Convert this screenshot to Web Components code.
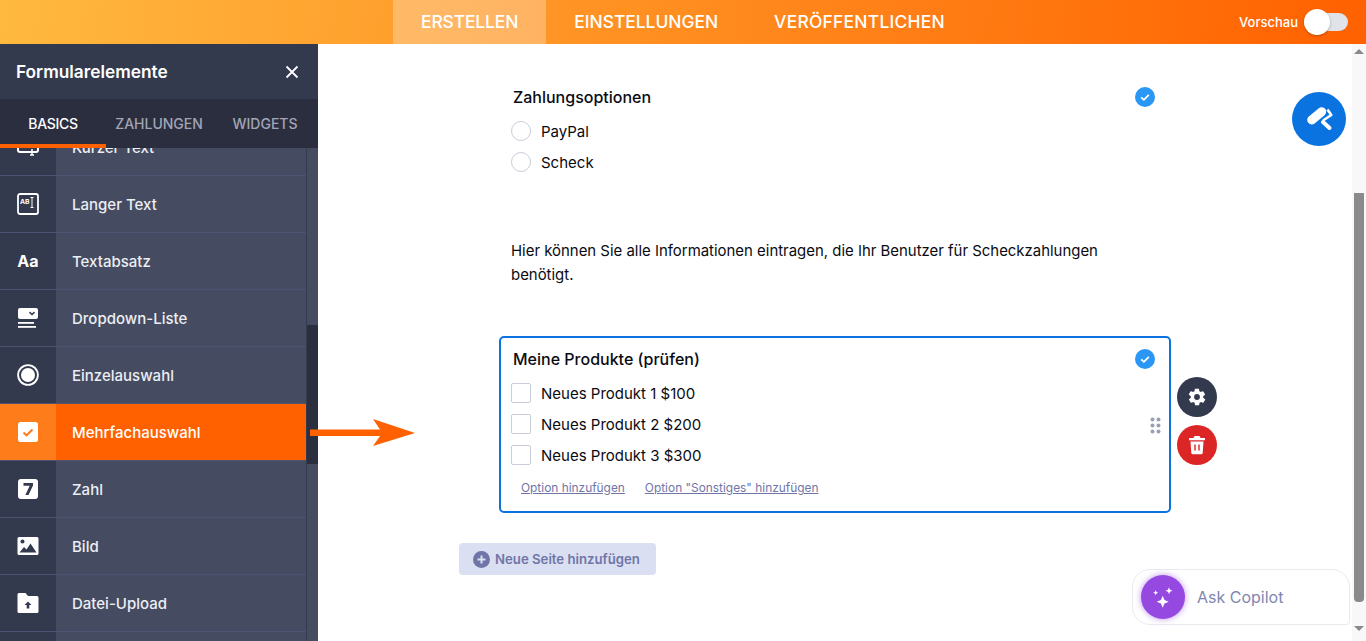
<!DOCTYPE html>
<html lang="de">
<head>
<meta charset="utf-8">
<title>Formular erstellen</title>
<style>
html, body { margin: 0; height: 100%; overflow: hidden; background: #fff; font-family: Inter, "Liberation Sans", sans-serif; }
</style>
</head>
<body>
<form-app>
  <top-bar slot="top">
    <nav-tab active style="letter-spacing:-.1px">ERSTELLEN</nav-tab>
    <nav-tab>EINSTELLUNGEN</nav-tab>
    <nav-tab style="letter-spacing:.27px">VERÖFFENTLICHEN</nav-tab>
  </top-bar>

  <element-panel slot="side">
    <panel-item label="Kurzer Text">
      <svg viewBox="0 0 22 22" width="22" height="22" fill="none" stroke="#fff" stroke-width="2"><rect x="1" y="1" width="20" height="15" rx="2"/><path d="M15 13v6M13 19h4" stroke-width="1.5"/><text x="3.500" y="11" font-size="7" font-weight="700" fill="#fff" stroke="none" font-family="Inter, sans-serif">AB</text></svg>
    </panel-item>
    <panel-item label="Langer Text">
      <svg viewBox="0 0 22 22" width="22" height="22" fill="none" stroke="#fff"><rect x="1" y="1" width="20" height="20" rx="2" stroke-width="1.800"/><text x="3" y="11" font-size="6.800" font-weight="700" fill="#fff" stroke="none" font-family="Inter, sans-serif">AB</text><path d="M13.500 4.500h3M15 4.500v10M13.500 14.500h3" stroke-width="1"/></svg>
    </panel-item>
    <panel-item label="Textabsatz">
      <span style="font:700 16px Inter, sans-serif;color:#fff;letter-spacing:.2px">Aa</span>
    </panel-item>
    <panel-item label="Dropdown-Liste">
      <svg viewBox="0 0 22 22" width="22" height="22" fill="#fff"><path d="M3 1h16a2 2 0 0 1 2 2v7a2 2 0 0 1-2 2H3a2 2 0 0 1-2-2V3a2 2 0 0 1 2-2z"/><path d="M12.500 5.200l2.500 2.300 2.500-2.300" fill="none" stroke="#343a4e" stroke-width="1.600"/><rect x="1" y="15" width="16" height="1.800"/><rect x="1" y="19" width="18" height="1.800"/></svg>
    </panel-item>
    <panel-item label="Einzelauswahl">
      <svg viewBox="0 0 22 22" width="22" height="22"><circle cx="11" cy="11" r="9.900" fill="none" stroke="#fff" stroke-width="1.800"/><circle cx="11" cy="11" r="7" fill="#fff"/></svg>
    </panel-item>
    <panel-item label="Mehrfachauswahl" active>
      <svg viewBox="0 0 22 22" width="22" height="22"><rect x="1" y="1" width="20" height="20" rx="2.500" fill="#fff"/><path d="M6.500 11.500l3 2.800 6-5.800" fill="none" stroke="#ff7c1a" stroke-width="2"/></svg>
    </panel-item>
    <panel-item label="Zahl">
      <svg viewBox="0 0 22 22" width="22" height="22"><rect x="1" y="1" width="20" height="20" rx="3" fill="#fff"/><path d="M6.500 5h9.500v2.600L11.500 17H8.400l4.300-9.300H6.500z" fill="#343a4e"/></svg>
    </panel-item>
    <panel-item label="Bild">
      <svg viewBox="0 0 22 22" width="22" height="22" fill="#fff"><path d="M2 2h18a1.500 1.500 0 0 1 1.500 1.500v15A1.500 1.500 0 0 1 20 20H2a1.500 1.500 0 0 1-1.500-1.500v-15A1.500 1.500 0 0 1 2 2z"/><circle cx="5.500" cy="6.500" r="2" fill="#343a4e"/><path d="M2.500 17.500l4.500-5.500 2.500 2.500 4-6 6 9z" fill="#343a4e"/></svg>
    </panel-item>
    <panel-item label="Datei-Upload">
      <svg viewBox="0 0 22 22" width="22" height="22" fill="#fff"><path d="M2 1h6.500L11 4h9a1.500 1.500 0 0 1 1.500 1.500V19.500A1.500 1.500 0 0 1 20 21H2a1.500 1.500 0 0 1-1.500-1.500v-17A1.500 1.500 0 0 1 2 1z"/><path d="M11 9.500l3.500 3.500h-2.200v3.500h-2.600V13H7.500z" fill="#343a4e"/></svg>
    </panel-item>
    <panel-item></panel-item>
  </element-panel>

  <form-canvas slot="main">
    <form-question title="Zahlungsoptionen">
      <choice-row kind="radio">PayPal</choice-row>
      <choice-row kind="radio">Scheck</choice-row>
    </form-question>

    <form-note>Hier können Sie alle Informationen eintragen, die Ihr Benutzer für Scheckzahlungen benötigt.</form-note>

    <form-question title="Meine Produkte (prüfen)" selected>
      <choice-row kind="box">Neues Produkt 1 $100</choice-row>
      <choice-row kind="box">Neues Produkt 2 $200</choice-row>
      <choice-row kind="box">Neues Produkt 3 $300</choice-row>
      <a slot="links" href="#">Option hinzufügen</a>
      <a slot="links" href="#">Option "Sonstiges" hinzufügen</a>
    </form-question>

    <add-page>Neue Seite hinzufügen</add-page>
  </form-canvas>

  <paint-button slot="float"></paint-button>
  <copilot-chip slot="float">Ask Copilot</copilot-chip>
  <guide-arrow slot="float"></guide-arrow>
</form-app>

<script>
// small helper so every element gets its open shadow root from a template
function shadowFrom(el, html) {
  const t = document.createElement("template");
  t.innerHTML = html;
  el.attachShadow({ mode: "open" }).appendChild(t.content.cloneNode(true));
}

class FormApp extends HTMLElement {
  constructor() {
    super();
    shadowFrom(this, `
<style>
:host { display: grid; grid-template-columns: 318px 1fr; grid-template-rows: 44px 1fr; height: 641px; width: 1366px; position: relative; overflow: hidden; }
.top { grid-column: 1 / 3; display: block; }
</style>
<slot name="top" class="top"></slot>
<slot name="side"></slot>
<slot name="main"></slot>
<slot name="float"></slot>`);
  }
}

class TopBar extends HTMLElement {
  constructor() {
    super();
    shadowFrom(this, `
<style>
:host { display: grid; grid-template-columns: 1fr auto 1fr; height: 44px; background: linear-gradient(96deg, #ffb93f 0%, #ff6100 100%); color: #fff; font-family: Inter, sans-serif; }
nav { display: flex; grid-column: 2; }
.preview { grid-column: 3; justify-self: end; display: flex; align-items: center; gap: 6px; padding-right: 18px; font-size: 13px; font-weight: 500; }
.switch { position: relative; width: 44px; height: 18px; border-radius: 9px; background: #e1e3ea; }
.switch::before { content: ""; position: absolute; left: 0; top: -4px; width: 26px; height: 26px; border-radius: 50%; background: #fff; box-shadow: 0 1px 3px rgba(0,0,0,.25); }
</style>
<nav><slot></slot></nav>
<div class="preview">Vorschau<span class="switch"></span></div>`);
  }
}

class NavTab extends HTMLElement {
  constructor() {
    super();
    shadowFrom(this, `
<style>
:host { display: flex; align-items: center; padding: 0 28px 1px; font-size: 17.400px; font-weight: 500; color: #fff; }
:host([active]) { background: rgba(255,255,255,.28); }
</style>
<slot></slot>`);
  }
}

class ElementPanel extends HTMLElement {
  constructor() {
    super();
    shadowFrom(this, `
<style>
:host { display: flex; flex-direction: column; width: 318px; height: 597px; overflow: hidden; background: #343a4e; color: #fff; font-family: Inter, sans-serif; }
.head { flex: none; height: 55px; display: flex; align-items: center; justify-content: space-between; padding: 0 19px 0 16px; font-size: 17.300px; font-weight: 600; }
.tabs { flex: none; height: 49px; display: grid; grid-template-columns: repeat(3, 106px); background: #2b2e3e; position: relative; z-index: 1; }
.tabs span { display: flex; align-items: center; justify-content: center; font-size: 14px; font-weight: 500; color: #a1a5b7; }
.tabs .on { color: #fff; letter-spacing: -.3px; box-shadow: inset 0 -4px 0 #ff6100; }
.body { flex: 1; min-height: 0; display: flex; }
.list { flex: 1; min-width: 0; overflow: hidden; }
.scroll { flex: none; width: 11px; border-left: 1px solid #353a4d; background: #454b60; }
.thumb { height: 139px; margin-top: 177px; background: #2b2e3e; }
.inner { margin-top: -29px; }
</style>
<div class="head">Formularelemente
  <svg width="14" height="14" viewBox="0 0 14 14" fill="none" stroke="#fff" stroke-width="1.800"><path d="M1.500 1.500l11 11M12.500 1.500l-11 11"/></svg>
</div>
<div class="tabs"><span class="on">BASICS</span><span>ZAHLUNGEN</span><span>WIDGETS</span></div>
<div class="body">
  <div class="list"><div class="inner"><slot></slot></div></div>
  <div class="scroll"><div class="thumb"></div></div>
</div>`);
  }
}

class PanelItem extends HTMLElement {
  constructor() {
    super();
    shadowFrom(this, `
<style>
:host { display: grid; grid-template-columns: 56px 1fr; height: 57px; box-sizing: border-box; border-bottom: 1px solid #4d5370; }
.icon { display: flex; align-items: center; justify-content: center; background: #343a4e; }
.text { display: flex; align-items: center; padding-left: 16px; background: #454b60; font-size: 15px; font-weight: 500; color: #eceef4; }
:host([active]) .icon { background: #ff7c1a; }
:host([active]) .text { background: #ff6100; color: #fff; }
</style>
<div class="icon"><slot></slot></div>
<div class="text"></div>`);
  }
  connectedCallback() {
    this.shadowRoot.querySelector(".text").textContent = this.getAttribute("label") || "";
  }
}

class FormCanvas extends HTMLElement {
  constructor() {
    super();
    shadowFrom(this, `
<style>
:host { display: flex; height: 597px; overflow: hidden; background: #fff; color: #0a0b12; font-family: Inter, sans-serif; }
.page { flex: 1; min-width: 0; display: flex; flex-direction: column; align-items: center; padding-top: 30px; }
.col { width: 672px; }
.bar { flex: none; width: 14px; display: flex; flex-direction: column; align-items: center; background: #f8f8f8; }
.up, .down { width: 0; height: 0; border: 5px solid transparent; }
.up { border-top: 0; border-bottom: 5px solid #8a8a8a; margin-top: 5px; }
.down { border-bottom: 0; border-top: 5px solid #8a8a8a; margin-top: 24px; }
.thumb { width: 10px; height: 409px; margin-top: 139px; border-radius: 0 0 4px 4px; background: #8a8a8a; }
</style>
<div class="page"><div class="col"><slot></slot></div></div>
<div class="bar"><i class="up"></i><div class="thumb"></div><i class="down"></i></div>`);
  }
}

class FormQuestion extends HTMLElement {
  constructor() {
    super();
    shadowFrom(this, `
<style>
:host { display: block; position: relative; box-sizing: border-box; border: 2px solid transparent; border-radius: 5px; padding: 10px 14px 0 10px; }
:host([selected]) { border-color: #0a73e0; height: 177px; }
.head { display: flex; align-items: center; justify-content: space-between; height: 22px; padding-left: 2px; margin-bottom: 7.500px; font-size: 16px; font-weight: 500; }
.tick { width: 20px; height: 20px; }
.links { display: flex; gap: 20px; padding: 9.500px 0 0 10px; font-size: 11.900px; }
.tools { display: none; position: absolute; left: 676px; top: 39px; flex-direction: column; gap: 8px; }
:host([selected]) .tools { display: flex; }
.btn { width: 40px; height: 40px; border-radius: 50%; display: flex; align-items: center; justify-content: center; }
.dots { display: none; position: absolute; left: 649px; top: 79px; }
:host([selected]) .dots { display: block; }
::slotted(a) { color: #6f76a7; }
</style>
<div class="head"><span class="title"></span>
  <svg class="tick" viewBox="0 0 20 20"><circle cx="10" cy="10" r="10" fill="#2a97f5"/><path d="M6.200 10.300l2.700 2.500 4.900-5" fill="none" stroke="#fff" stroke-width="1.800"/></svg>
</div>
<slot></slot>
<div class="links"><slot name="links"></slot></div>
<svg class="dots" width="11" height="17" viewBox="0 0 11 17" fill="#9a9fb5"><circle cx="2.500" cy="2.500" r="2"/><circle cx="8.500" cy="2.500" r="2"/><circle cx="2.500" cy="8.500" r="2"/><circle cx="8.500" cy="8.500" r="2"/><circle cx="2.500" cy="14.500" r="2"/><circle cx="8.500" cy="14.500" r="2"/></svg>
<div class="tools">
  <div class="btn" style="background:#343a4e">
    <svg width="20" height="20" viewBox="0 0 24 24" fill="#fff"><path d="M19.400 13a7.600 7.600 0 0 0 0-2l2.100-1.600a.5.5 0 0 0 .1-.6l-2-3.500a.5.5 0 0 0-.6-.2l-2.500 1a7.400 7.400 0 0 0-1.700-1l-.4-2.600a.5.5 0 0 0-.5-.5h-4a.5.5 0 0 0-.5.400l-.4 2.700a7.400 7.400 0 0 0-1.700 1l-2.500-1a.5.500 0 0 0-.6.200l-2 3.500a.5.500 0 0 0 .1.600L4.600 11a7.600 7.600 0 0 0 0 2l-2.100 1.600a.5.5 0 0 0-.1.600l2 3.500a.5.500 0 0 0 .6.200l2.500-1c.5.400 1.100.700 1.700 1l.4 2.600c0 .300.200.500.500.500h4c.300 0 .500-.200.500-.400l.4-2.700a7.400 7.400 0 0 0 1.700-1l2.500 1c.2.100.500 0 .6-.200l2-3.500a.5.500 0 0 0-.1-.6zM12 15.500a3.500 3.500 0 1 1 0-7 3.500 3.500 0 0 1 0 7z"/></svg>
  </div>
  <div class="btn" style="background:#dc2626">
    <svg width="18" height="20" viewBox="0 0 18 20"><path d="M6.500 1h5l1 2H17v2.200H1V3h4.500z" fill="#fff"/><path d="M2.500 6.500h13l-.8 11.500a1.500 1.500 0 0 1-1.500 1.300H4.800a1.500 1.500 0 0 1-1.500-1.300z" fill="#fff"/><path d="M7 9.500v6M11 9.500v6" stroke="#dc2626" stroke-width="1.400"/></svg>
  </div>
</div>`);
  }
  connectedCallback() {
    this.shadowRoot.querySelector(".title").textContent = this.getAttribute("title");
    this.removeAttribute("title");
  }
}

class ChoiceRow extends HTMLElement {
  constructor() {
    super();
    shadowFrom(this, `
<style>
:host { display: flex; align-items: center; gap: 10px; height: 31px; font-size: 15px; }
i { flex: none; width: 18px; height: 18px; border: 1px solid #c9cdd9; border-radius: 2px; background: #fff; }
:host([kind=radio]) i { border-radius: 50%; }
</style>
<i></i><span><slot></slot></span>`);
  }
}

class FormNote extends HTMLElement {
  constructor() {
    super();
    shadowFrom(this, `
<style>
:host { display: block; box-sizing: border-box; width: 620px; margin: 50px 0 49px 12px; font-size: 14.930px; line-height: 24px; }
</style>
<slot></slot>`);
  }
}

class AddPage extends HTMLElement {
  constructor() {
    super();
    shadowFrom(this, `
<style>
:host { display: inline-flex; align-items: center; gap: 5px; box-sizing: border-box; height: 32px; margin: 30px 0 0 -40px; padding: 0 16px 0 14px; border-radius: 4px; background: #dbdff2; color: #6f76a7; font-size: 13.200px; font-weight: 600; }
</style>
<svg width="17" height="17" viewBox="0 0 17 17"><circle cx="8.500" cy="8.500" r="8.500" fill="#6f76a7"/><path d="M8.500 4.500v8M4.500 8.500h8" stroke="#dbdff2" stroke-width="2"/></svg>
<slot></slot>`);
  }
}

class PaintButton extends HTMLElement {
  constructor() {
    super();
    shadowFrom(this, `
<style>
:host { position: absolute; left: 1292px; top: 92px; width: 54px; height: 54px; border-radius: 50%; background: #0a73e0; display: flex; align-items: center; justify-content: center; }
</style>
<svg width="30" height="30" viewBox="0 0 30 30"><path d="M7.700 16L17.700 7.700" stroke="#fff" stroke-width="9" stroke-linecap="round"/><path d="M23.500 5.500l3.800 5.500-8.300 5.500" fill="none" stroke="#fff" stroke-width="2.600" stroke-linejoin="round"/><path d="M19 18l6.500 6" stroke="#fff" stroke-width="4" stroke-linecap="round"/></svg>`);
  }
}

class CopilotChip extends HTMLElement {
  constructor() {
    super();
    shadowFrom(this, `
<style>
:host { position: absolute; left: 1132px; top: 569px; width: 218px; height: 56px; box-sizing: border-box; border: 1px solid #e9eaf0; border-radius: 18px 18px 4px 18px; background: #fff; display: flex; align-items: center; gap: 12px; padding-left: 8px; color: #7f86b0; font: 400 16px Inter, sans-serif; }
.orb { width: 44px; height: 44px; border-radius: 50%; background: #9549e0; box-shadow: 0 0 6px rgba(149,73,224,.6); display: flex; align-items: center; justify-content: center; }
</style>
<span class="orb"><svg width="24" height="24" viewBox="0 0 24 24" fill="#fff"><path d="M11.700 10.700l1.800 4.200 4.200 1.800-4.200 1.800-1.800 4.200-1.800-4.200-4.200-1.800 4.200-1.800z"/><path d="M4.700 5.200l.8 1.700 1.700.8-1.700.8-.8 1.700-.8-1.700-1.700-.8 1.700-.8z"/><path d="M18 2.200l1 2.500 2.500 1-2.500 1-1 2.500-1-2.500-2.500-1 2.500-1z"/></svg></span>
<slot></slot>`);
  }
}

class GuideArrow extends HTMLElement {
  constructor() {
    super();
    shadowFrom(this, `
<style>
:host { position: absolute; left: 310px; top: 419px; width: 105px; height: 27px; display: block; }
svg { display: block; }
</style>
<svg width="105" height="27" viewBox="0 0 105 27"><path d="M0 10.500h70L63 0l42 14-42 13 7-10H0z" fill="#ff6100"/></svg>`);
  }
}

customElements.define("form-app", FormApp);
customElements.define("top-bar", TopBar);
customElements.define("nav-tab", NavTab);
customElements.define("element-panel", ElementPanel);
customElements.define("panel-item", PanelItem);
customElements.define("form-canvas", FormCanvas);
customElements.define("form-question", FormQuestion);
customElements.define("choice-row", ChoiceRow);
customElements.define("form-note", FormNote);
customElements.define("add-page", AddPage);
customElements.define("paint-button", PaintButton);
customElements.define("copilot-chip", CopilotChip);
customElements.define("guide-arrow", GuideArrow);
</script>
</body>
</html>
